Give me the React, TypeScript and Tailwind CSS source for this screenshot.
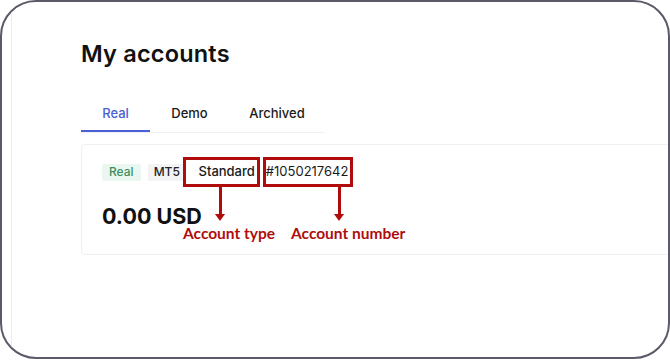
import React from 'react';

const tabs = [
  { label: 'Real', w: 'w-[69px]' },
  { label: 'Demo', w: 'w-[79px]' },
  { label: 'Archived', w: 'w-[96px]' },
];

function Arrow({ className }: { className: string }) {
  return (
    <div className={`absolute flex flex-col items-center ${className}`}>
      <div className="w-[3px] h-[27px] bg-[#b00c0c]" />
      <div className="w-0 h-0 border-l-[5px] border-r-[5px] border-t-[7px] border-l-transparent border-r-transparent border-t-[#b00c0c]" />
    </div>
  );
}

export default function App() {
  return (
    <div className="w-[670px] h-[360px] bg-white overflow-hidden" style={{ fontFamily: 'Inter, "Noto Sans", sans-serif' }}>
      <div className="w-[670px] h-[359px] rounded-[36px] border-[2.5px] border-[#5a5a68] overflow-hidden flex">
        {/* faint sidebar edge */}
        <div className="w-[10px] shrink-0 border-r border-[#ececf0]" />

        <div className="flex-1 pl-[69px] pt-[36px]">
          <h1 className="text-[23.5px] font-semibold text-[#111] tracking-[0.2px] leading-[32px]">My accounts</h1>

          {/* Tabs */}
          <div className="mt-[32px] flex w-[244px] border-b border-[#f1f1f4]">
            {tabs.map((t, i) => (
              <div
                key={t.label}
                className={`${t.w} h-[30px] flex items-start justify-center text-[13px] font-medium pt-[2px] ${
                  i === 0 ? 'text-[#4a60d4] border-b-2 border-[#4a60d4] -mb-px' : 'text-[#1a1a1a]'
                }`}
              >
                {t.label}
              </div>
            ))}
          </div>

          {/* Account card */}
          <div className="mt-[11px] w-[640px] h-[111px] border border-[#f0f0f3] rounded-[4px] pl-[20px] pt-[12px] relative">
            <div className="flex items-center">
              <span className="h-[17px] px-[7px] flex items-center text-[12px] font-medium text-[#3c8f5e] bg-[#eaf7f0] rounded-[2px]">Real</span>
              <span className="ml-[7px] h-[17px] px-[6px] flex items-center text-[12px] font-medium text-[#222] bg-[#f3f3f5] rounded-[2px]">MT5</span>
              <span className="ml-[-3px] w-[77px] h-[30px] border-[3px] border-[#b00c0c] flex items-center justify-end pr-[2px] text-[13px] font-medium text-[#1a1a1a]">Standard</span>
              <span className="ml-[3px] w-[90px] h-[30px] border-[3px] border-[#b00c0c] flex items-center text-[13px] text-[#1a1a1a]">#1050217642</span>
            </div>
            <div className="mt-[16px] text-[21.5px] font-bold text-[#111] leading-[26px]">0.00 USD</div>

            {/* right-edge cut off control */}
            <div className="absolute right-[-40px] top-[52px] w-[46px] h-[36px] rounded-[6px] border border-[#e4e4e8]" />

            {/* Annotations */}
            <Arrow className="left-[133px] top-[42px]" />
            <Arrow className="left-[252px] top-[42px]" />
            <div className="absolute left-[101px] top-[78px] text-[15.5px] font-bold text-[#b00c0c] leading-[20px]" style={{ fontFamily: 'Lato, sans-serif' }}>Account type</div>
            <div className="absolute left-[209px] top-[78px] text-[15.5px] font-bold text-[#b00c0c] leading-[20px]" style={{ fontFamily: 'Lato, sans-serif' }}>Account number</div>
          </div>
        </div>
      </div>
    </div>
  );
}
